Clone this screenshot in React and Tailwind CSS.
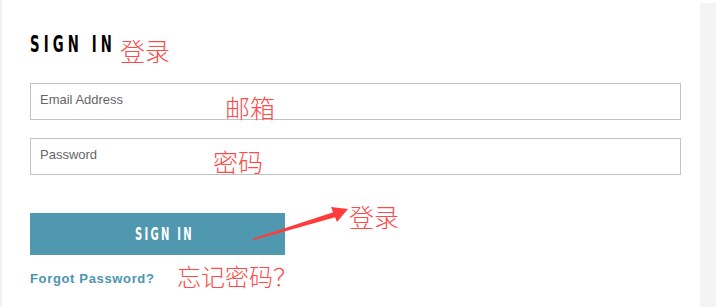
import React from 'react';

const cjk = { fontFamily: '"Noto Sans CJK SC", sans-serif' };
const narrow = { fontFamily: '"DejaVu Sans Condensed", "Liberation Sans Narrow", sans-serif', transformOrigin: 'left center' };

const Note = ({ className, children }) => (
  <span className={`absolute text-[#ff4a4a] font-light leading-none ${className}`} style={cjk}>
    {children}
  </span>
);

export default function App() {
  return (
    <div className="relative flex w-[716px] h-[307px] bg-white overflow-hidden" style={{ fontFamily: '"Liberation Sans", Arial, sans-serif' }}>
      <div className="w-[2px] bg-[#f2f2f2]" />

      <div className="flex-1 flex flex-col items-start pl-[28px] pt-[34px]">
        <h1
          className="inline-block text-[23px] leading-[20px] tracking-[0.28em] text-black font-bold whitespace-nowrap"
          style={{ ...narrow, transform: 'scaleX(0.64)' }}
        >
          SIGN IN
        </h1>

        <div className="mt-[29px] flex flex-col gap-[18px]">
          <div className="w-[651px] h-[37px] border border-[#c3c3c3] px-[9px] pt-[9px] text-[13px] leading-none text-[#666]">
            Email Address
          </div>
          <div className="w-[651px] h-[37px] border border-[#c3c3c3] px-[9px] pt-[9px] text-[13px] leading-none text-[#666]">
            Password
          </div>
        </div>

        <button className="mt-[38px] w-[255px] h-[42px] bg-[#5097b0] flex items-center justify-center pl-[14px]">
          <span
            className="inline-block text-white text-[18px] font-bold tracking-[0.2em] leading-none whitespace-nowrap"
            style={{ ...narrow, transform: 'scaleX(0.62)', transformOrigin: 'center' }}
          >
            SIGN IN
          </span>
        </button>

        <a className="mt-[17px] text-[13px] font-bold tracking-[0.05em] text-[#4b95b0] leading-none">
          Forgot Password?
        </a>
      </div>

      <div className="w-[16px] mt-[3px] bg-[#f4f4f4]" />

      {/* red annotations */}
      <Note className="left-[120px] top-[38px] text-[25px]">登录</Note>
      <Note className="left-[225px] top-[95px] text-[25px]">邮箱</Note>
      <Note className="left-[213px] top-[149px] text-[25px]">密码</Note>
      <Note className="left-[349px] top-[204px] text-[25px]">登录</Note>
      <Note className="left-[177px] top-[264px] text-[24px]">忘记密码？</Note>

      <svg className="absolute left-0 top-0 pointer-events-none" width="716" height="307">
        <polygon points="252,239 334,212 336,217 254,240" fill="#ff3b3b" />
        <polygon points="348,209 331,207 337,222" fill="#ff3b3b" />
      </svg>
    </div>
  );
}
